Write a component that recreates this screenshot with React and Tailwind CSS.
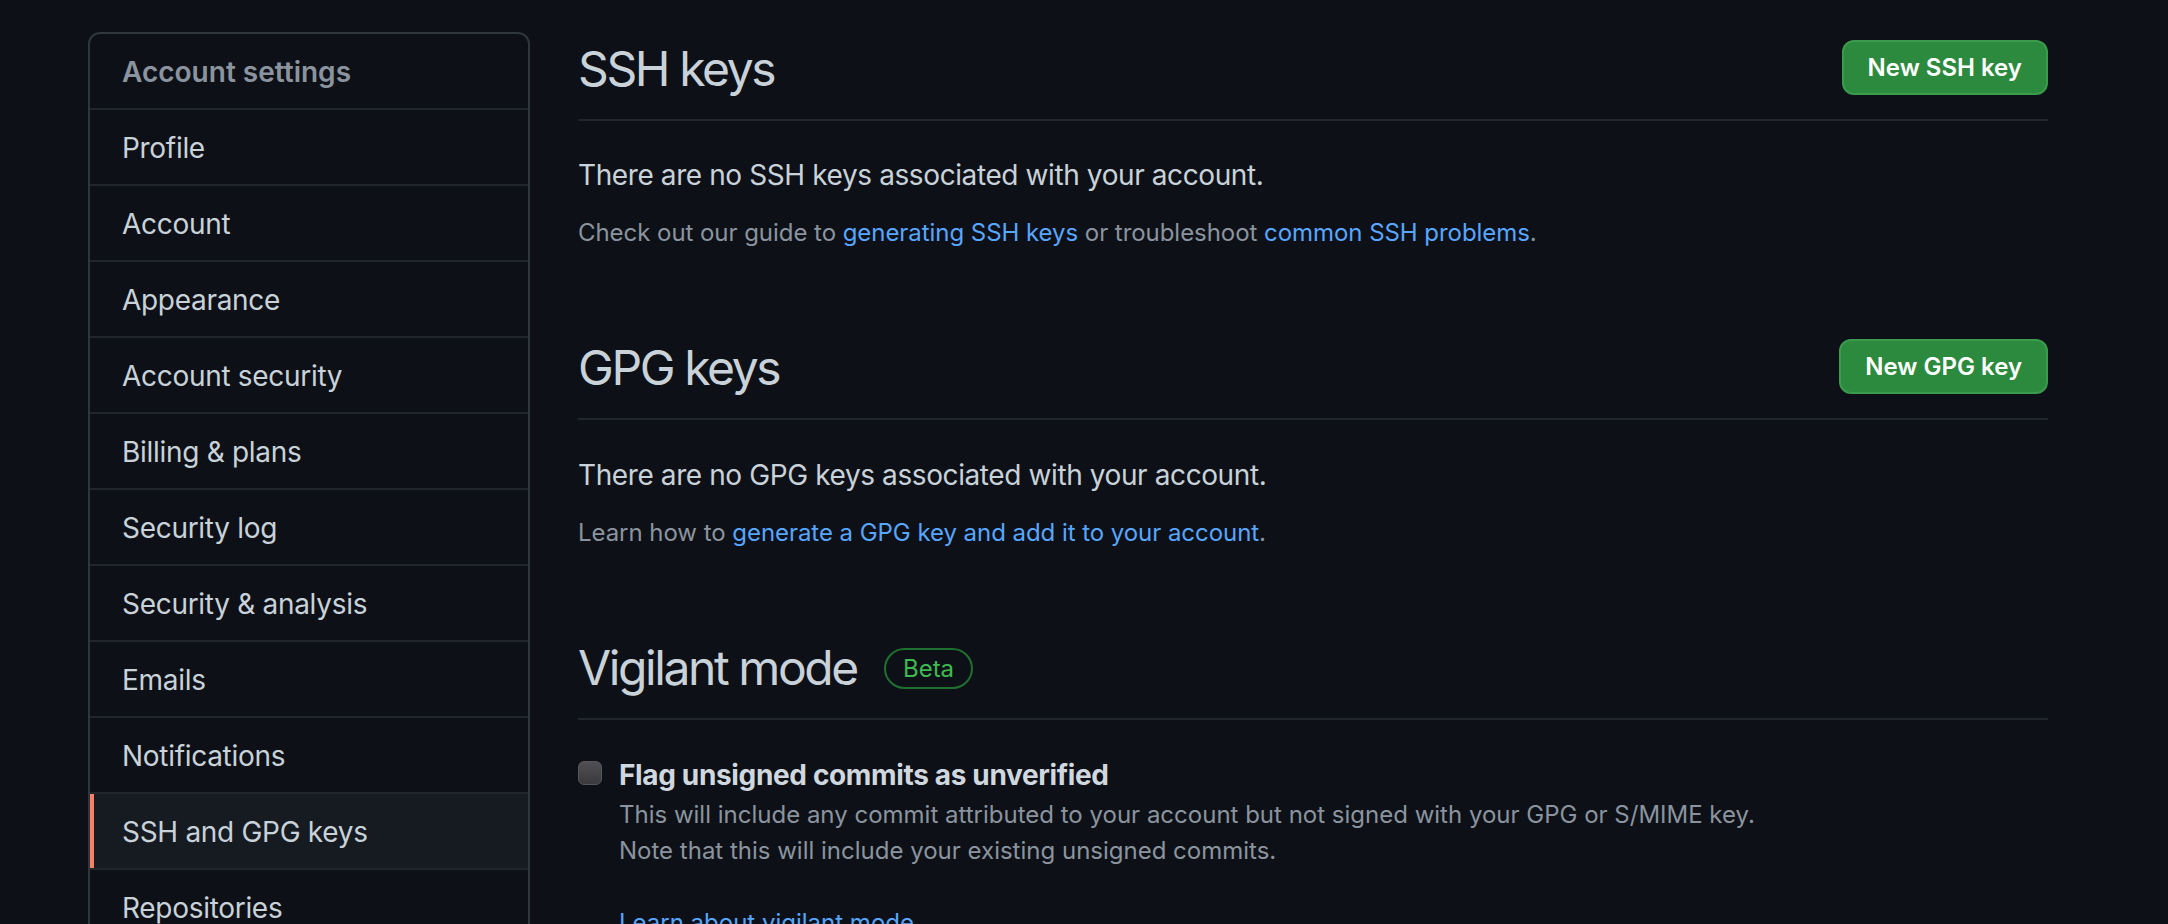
import React from "react";

const items = [
  "Profile",
  "Account",
  "Appearance",
  "Account security",
  "Billing & plans",
  "Security log",
  "Security & analysis",
  "Emails",
  "Notifications",
  "SSH and GPG keys",
  "Repositories",
];

function Sidebar() {
  return (
    <nav className="w-[442px] shrink-0 self-start rounded-[12px] border-2 border-[#30363d] overflow-hidden">
      <div className="px-[32px] pt-[17px] pb-[15px] text-[28px] leading-[42px] font-semibold text-[#8b949e] border-b-2 border-[#21262d]">
        Account settings
      </div>
      {items.map((label) => {
        const active = label === "SSH and GPG keys";
        return (
          <div
            key={label}
            className={
              active
                ? "px-[32px] pt-[17px] pb-[15px] text-[28px] leading-[42px] tracking-[-0.3px] text-[#c9d1d9] border-b-2 border-[#21262d] bg-[#161b22] shadow-[inset_4px_0_0_#f78166]"
                : "px-[32px] pt-[17px] pb-[15px] text-[28px] leading-[42px] tracking-[-0.3px] text-[#c9d1d9] border-b-2 border-[#21262d]"
            }
          >
            {label}
          </div>
        );
      })}
    </nav>
  );
}

function SectionHeader({ title, button, children }) {
  return (
    <div className="flex items-start justify-between pb-[20px] border-b-2 border-[#21262d]">
      <div className="flex items-center">
        <h2 className="text-[48px] leading-[60px] font-normal tracking-[-2.4px] text-[#c9d1d9]">{title}</h2>
        {children}
      </div>
      {button && (
        <button className="mt-[1px] h-[55px] px-[24px] rounded-[12px] bg-[#2b8a3e] border-2 border-[#3b9b4c] text-white text-[24px] leading-[36px] font-semibold">
          {button}
        </button>
      )}
    </div>
  );
}

export default function App() {
  return (
    <div className="h-[924px] w-[2168px] overflow-hidden bg-[#0d1117] font-[Inter,sans-serif] text-[#c9d1d9]">
      <div className="flex gap-[48px] pl-[88px] pt-[32px]">
        <Sidebar />
        <main className="w-[1470px] pt-[7px]">
          <SectionHeader title="SSH keys" button="New SSH key" />
          <p className="mt-[33px] text-[28px] leading-[42px] tracking-[-0.4px]">
            There are no SSH keys associated with your account.
          </p>
          <p className="mt-[19px] text-[24px] leading-[36px] tracking-[-0.05px] text-[#8b949e]">
            Check out our guide to <a className="text-[#58a6ff]">generating SSH keys</a> or troubleshoot{" "}
            <a className="text-[#58a6ff]">common SSH problems</a>.
          </p>

          <div className="mt-[87px]">
            <SectionHeader title="GPG keys" button="New GPG key" />
          </div>
          <p className="mt-[34px] text-[28px] leading-[42px] tracking-[-0.4px]">
            There are no GPG keys associated with your account.
          </p>
          <p className="mt-[19px] text-[24px] leading-[36px] tracking-[-0.05px] text-[#8b949e]">
            Learn how to <a className="text-[#58a6ff]">generate a GPG key and add it to your account</a>.
          </p>

          <div className="mt-[87px]">
            <SectionHeader title="Vigilant mode">
              <span className="ml-[27px] h-[41px] px-[17px] rounded-full border-2 border-[#1f6f2f] text-[#3fb950] text-[24px] leading-[37px]">
                Beta
              </span>
            </SectionHeader>
          </div>
          <div className="mt-[34px] flex">
            <span className="mt-[7px] h-[24px] w-[24px] shrink-0 rounded-[6px] border border-[#55555a] bg-gradient-to-b from-[#4f4f54] to-[#3a3a3e]" />
            <div className="ml-[17px]">
              <div className="mt-[1px] text-[28px] leading-[40px] font-bold tracking-[-0.35px] text-[#d0d7de]">
                Flag unsigned commits as unverified
              </div>
              <div className="mt-[2px] text-[24px] leading-[36px] text-[#8b949e]">
                This will include any commit attributed to your account but not signed with your GPG or S/MIME key.
              </div>
              <div className="text-[24px] leading-[36px] text-[#8b949e]">
                Note that this will include your existing unsigned commits.
              </div>
              <div className="mt-[36px] text-[24px] leading-[36px]">
                <a className="text-[#58a6ff]">Learn about vigilant mode</a>.
              </div>
            </div>
          </div>
        </main>
      </div>
    </div>
  );
}
